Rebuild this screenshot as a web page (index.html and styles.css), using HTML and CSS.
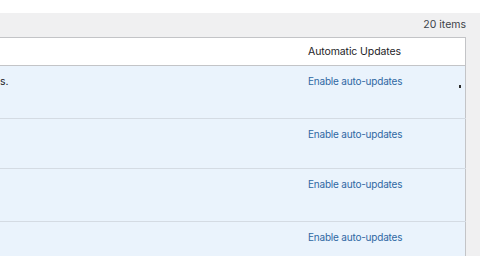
FILE: index.html
```html
<!DOCTYPE html>
<html lang="en">
<head>
  <meta charset="UTF-8">
  <title>Plugins</title>
  <link rel="stylesheet" href="styles.css">
</head>
<body>
  <div class="wrap">
    <div class="tablenav">
      <span class="count">20 items</span>
    </div>
    <table class="plugins">
      <thead>
        <tr>
          <th class="col-desc"></th>
          <th class="col-auto">Automatic Updates</th>
        </tr>
      </thead>
      <tbody>
        <tr class="row-tall">
          <td class="col-desc"><span class="desc-tail">s.</span></td>
          <td class="col-auto"><a href="#">Enable auto-updates</a></td>
        </tr>
        <tr class="row-short">
          <td class="col-desc"></td>
          <td class="col-auto"><a href="#">Enable auto-updates</a></td>
        </tr>
        <tr class="row-tall">
          <td class="col-desc"></td>
          <td class="col-auto"><a href="#">Enable auto-updates</a></td>
        </tr>
        <tr class="row-tall">
          <td class="col-desc"></td>
          <td class="col-auto"><a href="#">Enable auto-updates</a></td>
        </tr>
      </tbody>
    </table>
    <span class="cursor"></span>
  </div>
</body>
</html>
```

FILE: styles.css
```css
:root {
  --admin-bg: #f0f0f1;
  --border: #c3c4c7;
  --row-line: #d4dbe3;
  --active-row: #eaf3fc;
  --link: #2f68a3;
  --text: #1d2327;
}

* {
  margin: 0;
  padding: 0;
  box-sizing: border-box;
}

body {
  font-family: 'Inter', 'Liberation Sans', sans-serif;
  font-size: 10.5px;
  color: var(--text);
  background-color: #ffffff;
}

.wrap {
  position: relative;
  margin-top: 13px;
  height: 243px;
  overflow: hidden;
  background-color: var(--admin-bg);
}

.tablenav {
  display: flex;
  justify-content: flex-end;
  height: 24px;
  padding: 5px 14px 0 0;
}

.count {
  color: #3c434a;
}

table {
  width: 466px;
  border-collapse: collapse;
  background-color: #ffffff;
  border: 1px solid var(--border);
  border-left: none;
}

th {
  height: 28px;
  text-align: left;
  font-weight: 400;
  letter-spacing: -0.1px;
  border-bottom: 1px solid var(--border);
  padding: 0;
}

td {
  vertical-align: top;
  padding: 9px 0 0;
  background-color: var(--active-row);
  border-bottom: 1px solid var(--row-line);
}

.col-desc {
  width: 308px;
}

.row-tall td {
  height: 53px;
}

.row-short td {
  height: 50px;
}

.desc-tail {
  display: block;
}

a {
  color: var(--link);
  font-size: 10px;
  letter-spacing: -0.2px;
  text-decoration: none;
}

/* mouse pointer left in the capture */
.cursor {
  position: absolute;
  left: 459px;
  top: 72px;
  width: 2px;
  height: 3px;
  background-color: #2a2a2a;
}
```
